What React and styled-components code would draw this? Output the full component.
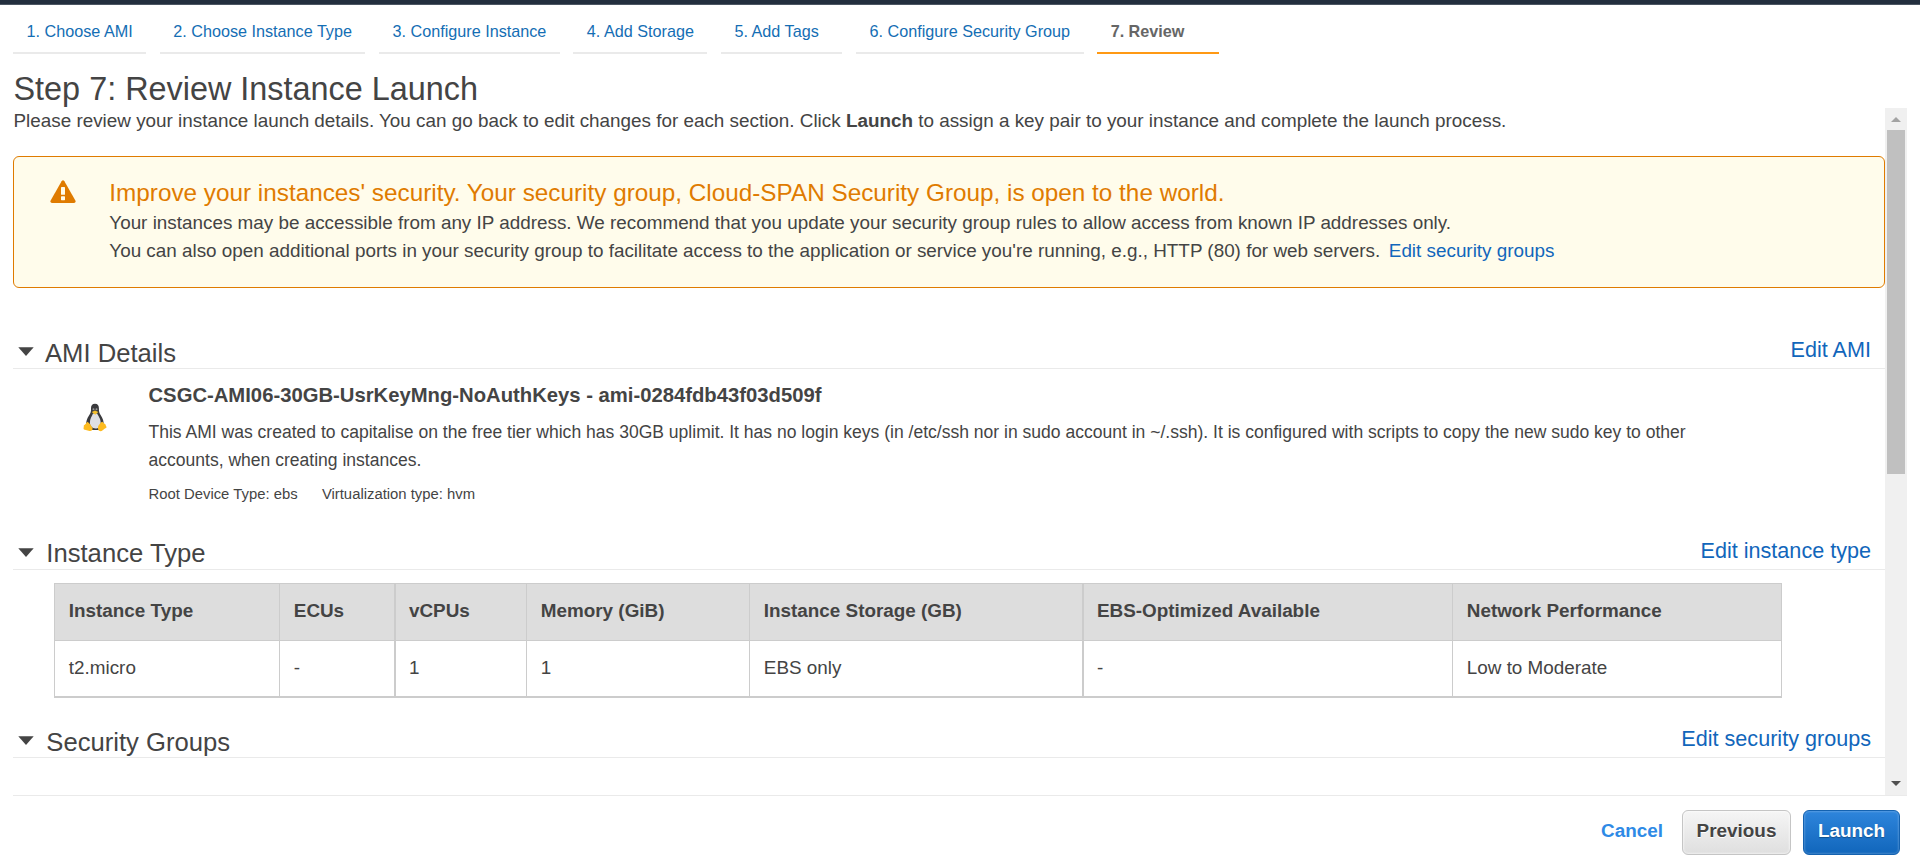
import React from 'react';
import styled, { createGlobalStyle, css } from 'styled-components';

const GlobalStyle = createGlobalStyle`
  * { box-sizing: border-box; }
  body {
    margin: 0;
    background: #fff;
    color: #444;
    font-family: "Liberation Sans", Arial, Helvetica, sans-serif;
    font-size: 18.88px;
  }
  h1, h2, h3, p { margin: 0; font-weight: normal; }
`;

const Page = styled.div`
  display: flex;
  flex-direction: column;
  height: 856px;
  overflow: hidden;
`;

const TopBar = styled.div`
  flex: none;
  height: 5px;
  background: #232f3e;
  border-bottom: 1px solid #4c5663;
`;

const Steps = styled.nav`
  display: flex;
  flex: none;
  gap: 13.5px;
  padding-left: 13px;
`;

const Step = styled.a`
  min-width: 121.5px;
  padding: 16px 13.5px 11px;
  line-height: 20px;
  font-size: 16.2px;
  white-space: nowrap;
  color: #146eb4;
  border-bottom: 2px solid #eaeaea;
  ${(p) => p.$active && css`
    color: #666;
    font-weight: bold;
    border-bottom-color: #ff9914;
  `}
`;

const Title = styled.h1`
  flex: none;
  margin-top: 17px;
  padding-left: 13.5px;
  height: 37px;
  line-height: 36px;
  font-size: 32.4px;
`;

const Body = styled.main`
  display: flex;
  flex: none;
  height: 687px;
  margin: 0 13px;
`;

const Content = styled.div`
  width: 1872px;
  overflow: hidden;
`;

const Intro = styled.p`
  line-height: 25px;
  padding-left: 0.5px;
`;

const Alert = styled.section`
  display: flex;
  height: 132px;
  margin: 23px 0 48px;
  padding: 20px 0 0 36px;
  background: #fffceb;
  border: 1px solid #df7b00;
  border-radius: 6px;
`;

const WarningIcon = styled.svg`
  flex: none;
  margin-top: 3px;
`;

const AlertText = styled.div`
  margin-left: 33.3px;
  line-height: 28px;
`;

const AlertTitle = styled.h2`
  font-size: 24.3px;
  line-height: 32px;
  color: #df7b00;
`;

const Link = styled.a`
  color: #1166bb;
  margin-left: ${(p) => p.$gap || 0}px;
`;

const SectionHead = styled.header`
  display: flex;
  height: 33px;
  padding: 0 14px 0 5px;
  border-bottom: 1px solid #eaeaea;
`;

const SectionTitle = styled.h2`
  flex: 1;
  margin-left: ${(p) => p.$gap}px;
  padding-top: ${(p) => p.$top}px;
  font-size: 25.65px;
  line-height: 30px;
`;

const EditLink = styled.a`
  padding-top: 1px;
  font-size: 21.6px;
  line-height: 26px;
  color: #1166bb;
`;

const Caret = styled.svg`
  flex: none;
  margin-top: 11px;
`;

const Ami = styled.div`
  display: flex;
  height: 168px;
  padding: 12px 0 0 70px;
`;

const AmiText = styled.div`
  margin-left: 41.5px;
  width: 1570px;
`;

const AmiName = styled.h3`
  font-size: 20.25px;
  line-height: 28px;
  font-weight: bold;
`;

const AmiDescription = styled.p`
  margin-top: 9px;
  font-size: 17.55px;
  line-height: 28px;
`;

const AmiMeta = styled.div`
  display: flex;
  gap: 24.3px;
  margin-top: 10px;
  font-size: 14.85px;
  line-height: 20px;
`;

const TuxIcon = styled.svg`
  flex: none;
  margin-top: 22px;
`;

const TypeTable = styled.div`
  width: 1728px;
  margin: 13px 0 27px 41px;
  border-bottom: 2px solid #ccc;
  border-right: 1px solid #ccc;
`;

const Row = styled.div`
  display: grid;
  grid-template-columns: 225px 115px 132px 223px 333px 370px 1fr;
  height: ${(p) => (p.$head ? 57 : 56)}px;
  line-height: 54px;
  border-top: 1px solid #ccc;
  ${(p) => p.$head && css`
    background: #ddd;
    font-weight: bold;
  `}
`;

const Cell = styled.div`
  padding-left: ${(p) => (p.$thick ? 13 : 13.8)}px;
  border-left: ${(p) => (p.$thick ? 2 : 1)}px solid #ccc;
  white-space: nowrap;
`;

const Scrollbar = styled.div`
  display: flex;
  flex-direction: column;
  align-items: center;
  width: 22px;
  background: #f0f0f0;
`;

const ScrollArrow = styled.svg`
  flex: none;
`;

const Thumb = styled.div`
  width: 18px;
  height: 344px;
  margin-bottom: auto;
  background: #c0c0c0;
`;

const Footer = styled.footer`
  display: flex;
  justify-content: flex-end;
  flex: none;
  height: 61px;
  margin: 0 13px;
  padding: 14px 7px 0 0;
  border-top: 1px solid #eaeaea;
`;

const Button = styled.button`
  height: 45px;
  margin: 0 0 0 12px;
  padding: 0 0 4px;
  font: bold 18.9px "Liberation Sans", Arial, sans-serif;
  border-radius: 6px;
  ${(p) => p.$kind === 'link' && css`
    width: 62px;
    margin-right: 7px;
    border: 0;
    background: none;
    color: #2e8ae6;
  `}
  ${(p) => p.$kind === 'plain' && css`
    width: 109px;
    color: #444;
    border: 1px solid #c5c5c5;
    background: linear-gradient(#f5f5f5, #dfdfdf);
    box-shadow: inset 0 0 2px 1px rgba(255, 255, 255, 0.5);
    text-shadow: 0 1px 0 #fff;
  `}
  ${(p) => p.$kind === 'primary' && css`
    width: 97px;
    color: #fff;
    border: 1px solid #1462b0;
    background: linear-gradient(#2e85dc, #1166bb);
    box-shadow: inset 0 0 2px 1px rgba(255, 255, 255, 0.2);
    text-shadow: 0 1px 1px rgba(0, 0, 0, 0.3);
  `}
`;

const steps = [
  '1. Choose AMI',
  '2. Choose Instance Type',
  '3. Configure Instance',
  '4. Add Storage',
  '5. Add Tags',
  '6. Configure Security Group',
  '7. Review',
];

const columns = [
  { name: 'Instance Type', value: 't2.micro' },
  { name: 'ECUs', value: '-' },
  { name: 'vCPUs', value: '1', thick: true },
  { name: 'Memory (GiB)', value: '1' },
  { name: 'Instance Storage (GB)', value: 'EBS only' },
  { name: 'EBS-Optimized Available', value: '-', thick: true },
  { name: 'Network Performance', value: 'Low to Moderate' },
];

function Warning() {
  return (
    <WarningIcon width="26" height="24" viewBox="0 0 26 24">
      <path
        d="M11.6 1.2Q13 -.8 14.4 1.2L25.5 20.8Q26 22.8 24 23H2Q0 22.8 .5 20.8Z"
        fill="#df7b00"
      />
      <rect x="11" y="7" width="4" height="7.800" rx="0.6" fill="#fffceb" />
      <rect x="11" y="16.2" width="4" height="4" rx="0.6" fill="#fffceb" />
    </WarningIcon>
  );
}

function Tux() {
  return (
    <TuxIcon width="24" height="29" viewBox="0 0 24 29">
      <path
        d="M12 .8c-2.7 0-4.1 1.9-4 4.5.1 3.5-.2 4.6-2 7.3-2 3.200-3.200 6.200-2.700 9.600L8 27h8.500l4-5c.5-3.700-.7-6.600-2.600-9.500-1.700-2.600-2-3.700-2-7.200C16 2.700 14.700.8 12 .8Z"
        fill="#3a3a3d"
      />
      <path
        d="M10 10.500h4.200c.8 2.300 3.600 5 3.500 9.200-.1 3.500-2.200 5.800-5.300 5.800s-5.400-2.400-5.500-5.700c-.1-4 2.200-6.800 3.100-9.300Z"
        fill="#dfdfe3"
      />
      <circle cx="10.500" cy="6.200" r="1" fill="#999" />
      <circle cx="13.500" cy="6.200" r="1" fill="#999" />
      <path d="M8.800 9 12 7.600l3.300 1.400-3.100 2.800Z" fill="#f5c02c" />
      <path d="M4.200 18.800c2 .6 4 4 5.300 6.300.5 1.900-.9 3.300-3 2.900L.9 26.600c-.8-1 .1-2.500-.1-4.200 1.300-.9 2.200-1.600 3.400-3.600Z" fill="#fdbb20" />
      <path d="M19.500 18.800c-2 .2-3 2.800-4.300 4.300-.3 2-.5 4.300 1.300 5 2.400.7 3.800-2 6.900-3.400.5-1.200-.9-2.100-1-3.500-.9-.3-1.700-.9-2.900-2.400Z" fill="#fdbb20" />
    </TuxIcon>
  );
}

function Section({ title, edit, gap, top = 2 }) {
  return (
    <SectionHead>
      <Caret width="16" height="9" viewBox="0 0 16 9">
        <path d="M.3 .2H15.700L8 9Z" fill="#444" />
      </Caret>
      <SectionTitle $gap={gap} $top={top}>{title}</SectionTitle>
      <EditLink>{edit}</EditLink>
    </SectionHead>
  );
}

export default function App() {
  return (
    <Page>
      <GlobalStyle />
      <TopBar />
      <Steps>
        {steps.map((label, i) => (
          <Step key={label} $active={i === steps.length - 1}>{label}</Step>
        ))}
      </Steps>
      <Title>Step 7: Review Instance Launch</Title>
      <Body>
        <Content>
          <Intro>
            Please review your instance launch details. You can go back to edit changes for each
            section. Click <b>Launch</b> to assign a key pair to your instance and complete the
            launch process.
          </Intro>
          <Alert>
            <Warning />
            <AlertText>
              <AlertTitle>
                Improve your instances' security. Your security group, Cloud-SPAN Security Group, is
                open to the world.
              </AlertTitle>
              <p>
                Your instances may be accessible from any IP address. We recommend that you update
                your security group rules to allow access from known IP addresses only.
              </p>
              <p>
                You can also open additional ports in your security group to facilitate access to
                the application or service you're running, e.g., HTTP (80) for web servers.
                <Link $gap={8.5}>Edit security groups</Link>
              </p>
            </AlertText>
          </Alert>
          <Section title="AMI Details" edit="Edit AMI" gap={11} />
          <Ami>
            <Tux />
            <AmiText>
              <AmiName>CSGC-AMI06-30GB-UsrKeyMng-NoAuthKeys - ami-0284fdb43f03d509f</AmiName>
              <AmiDescription>
                This AMI was created to capitalise on the free tier which has 30GB uplimit. It has
                no login keys (in /etc/ssh nor in sudo account in ~/.ssh). It is configured with
                scripts to copy the new sudo key to other accounts, when creating instances.
              </AmiDescription>
              <AmiMeta>
                <span>Root Device Type: ebs</span>
                <span>Virtualization type: hvm</span>
              </AmiMeta>
            </AmiText>
          </Ami>
          <Section title="Instance Type" edit="Edit instance type" gap={12.3} top={1} />
          <TypeTable>
            <Row $head>
              {columns.map((c) => <Cell key={c.name} $thick={c.thick}>{c.name}</Cell>)}
            </Row>
            <Row>
              {columns.map((c) => <Cell key={c.name} $thick={c.thick}>{c.value}</Cell>)}
            </Row>
          </TypeTable>
          <Section title="Security Groups" edit="Edit security groups" gap={12.3} />
        </Content>
        <Scrollbar>
          <ScrollArrow width="22" height="22" viewBox="0 0 22 22">
            <path d="M6 14H16L11 9Z" fill="#a3a3a3" />
          </ScrollArrow>
          <Thumb />
          <ScrollArrow width="22" height="22" viewBox="0 0 22 22">
            <path d="M6 8H16L11 13Z" fill="#505050" />
          </ScrollArrow>
        </Scrollbar>
      </Body>
      <Footer>
        <Button $kind="link">Cancel</Button>
        <Button $kind="plain">Previous</Button>
        <Button $kind="primary">Launch</Button>
      </Footer>
    </Page>
  );
}
